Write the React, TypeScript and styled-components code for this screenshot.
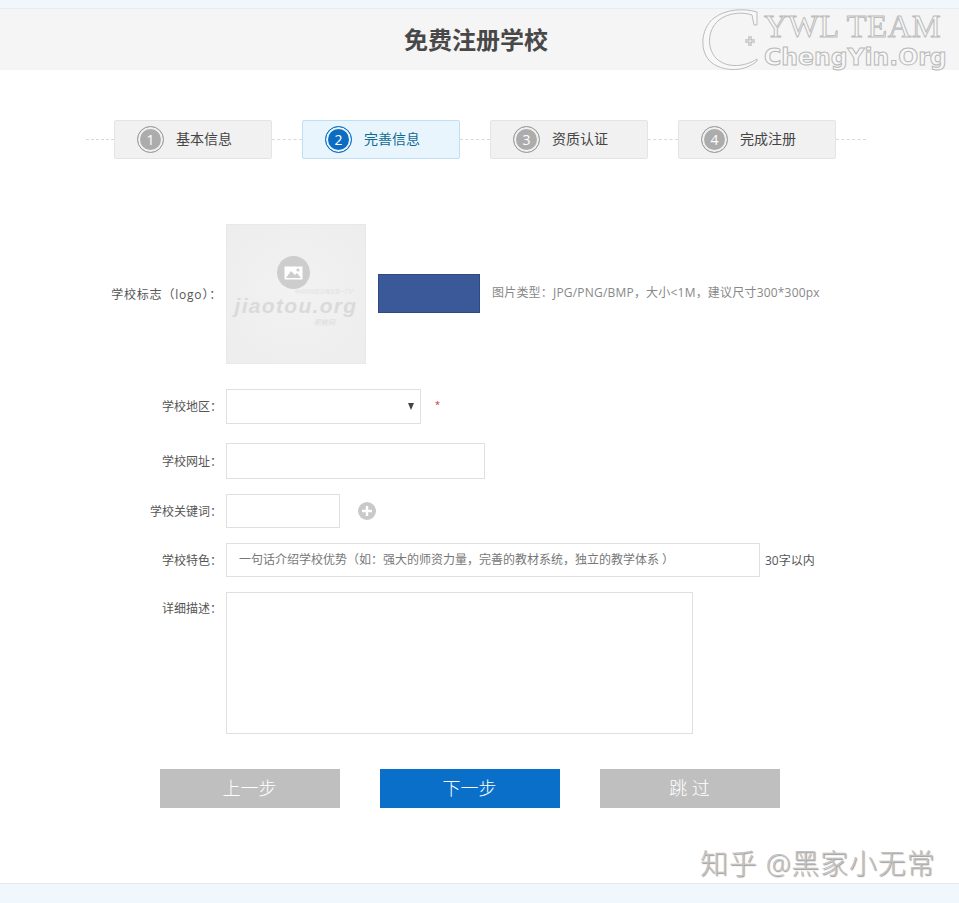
import React from 'react';
import styled, { createGlobalStyle } from 'styled-components';

const cjk = '"Open Sans", "Noto Sans CJK SC", sans-serif';

const GlobalStyle = createGlobalStyle`
  html, body {
    margin: 0;
    padding: 0;
    background: #fff;
    font-family: ${cjk};
  }
  * {
    box-sizing: border-box;
  }
`;

const Page = styled.div`
  position: relative;
  width: 959px;
  height: 903px;
  overflow: hidden;
  display: flex;
  flex-direction: column;
`;
const TopStrip = styled.div`
  height: 9px;
  background: #f0f7fd;
  border-bottom: 1px solid #e6edf2;
`;
const Header = styled.header`
  height: 61px;
  background: #f5f5f5;
  display: flex;
  align-items: center;
  justify-content: center;
  padding-right: 7px;
  h1 {
    margin: 0;
    font-size: 24px;
    font-weight: 700;
    color: #484848;
    line-height: 61px;
  }
`;
const Main = styled.main`
  flex: 1;
  background: #fff;
`;
const Steps = styled.div`
  display: flex;
  align-items: center;
  margin: 50px 93px 0 86px;
  height: 39px;
`;
const Dash = styled.span<{ w: number }>`
  width: ${(p) => p.w}px;
  border-top: 1px dashed #d9d9d9;
`;
const Step = styled.div<{ active?: boolean }>`
  width: 158px;
  height: 39px;
  display: flex;
  align-items: center;
  padding-left: 22px;
  gap: 12px;
  border: 1px solid ${(p) => (p.active ? '#bfe0f3' : '#e4e4e4')};
  border-radius: 2px;
  background: ${(p) => (p.active ? '#e9f5fc' : '#f1f1f1')};
  color: ${(p) => (p.active ? '#0f6a96' : '#444')};
  font-size: 14px;
  line-height: 14px;
  padding-bottom: 1px;
`;
const StepNum = styled.span<{ active?: boolean }>`
  width: 27px;
  height: 27px;
  margin-top: 1px;
  border-radius: 50%;
  display: flex;
  align-items: center;
  justify-content: center;
  font-size: 14px;
  color: #fff;
  background: ${(p) => (p.active ? '#0b6cc2' : '#acacac')};
  box-shadow: inset 0 0 0 2px ${(p) => (p.active ? '#e9f5fc' : '#f1f1f1')};
  border: 1px solid ${(p) => (p.active ? '#0b6cc2' : '#9c9c9c')};
`;
const Form = styled.form`
  margin-top: 65px;
  display: flex;
  flex-direction: column;
`;
const Row = styled.div<{ top?: number; start?: boolean }>`
  display: flex;
  align-items: ${(p) => (p.start ? 'flex-start' : 'center')};
  margin-top: ${(p) => p.top ?? 0}px;
`;
const Label = styled.label<{ start?: boolean; spread?: number }>`
  width: 222px;
  margin-right: 4px;
  text-align: right;
  font-size: 12px;
  line-height: 16px;
  color: #555;
  letter-spacing: ${(p) => p.spread ?? 0}px;
  margin-top: ${(p) => (p.start ? '9px' : '1px')};
  flex-shrink: 0;
`;
const Thumb = styled.div`
  position: relative;
  width: 140px;
  height: 140px;
  background: radial-gradient(circle at center, #f2f2f2 0%, #ededed 100%);
  border: 1px solid #e9e9e9;
  display: flex;
  flex-direction: column;
  align-items: center;
  padding-top: 31px;
  padding-right: 6px;
  overflow: hidden;
`;
const ThumbIcon = styled.div`
  width: 33px;
  height: 33px;
  border-radius: 50%;
  background: #cdcdcd;
  display: flex;
  align-items: center;
  justify-content: center;
`;
const ThumbCaption = styled.div`
  align-self: flex-end;
  height: 5px;
  padding-right: 4px;
  font-size: 5px;
  line-height: 5px;
  color: #e1e1e1;
`;
const ThumbBrand = styled.div`
  font-family: "Liberation Sans", sans-serif;
  font-size: 21px;
  line-height: 24px;
  height: 24px;
  margin-left: 6px;
  font-weight: 700;
  font-style: italic;
  letter-spacing: 1.3px;
  color: #dadada;
`;
const ThumbSub = styled.div`
  align-self: flex-end;
  padding-right: 24px;
  font-size: 7px;
  line-height: 9px;
  font-style: italic;
  color: #dcdcdc;
`;
const UploadBtn = styled.button`
  width: 102px;
  height: 39px;
  margin: -2px 12px 0 12px;
  padding: 0;
  background: #3b5998;
  border: 1px solid #2f4a80;
`;
const Hint = styled.span`
  font-size: 12px;
  line-height: 16px;
  letter-spacing: 0.2px;
  color: #888;
  margin-top: -2px;
`;
const SelectWrap = styled.div`
  position: relative;
  width: 195px;
  height: 35px;
`;
const Select = styled.select`
  width: 100%;
  height: 100%;
  appearance: none;
  background: #fff;
  border: 1px solid #e0e0e0;
`;
const Arrow = styled.span`
  position: absolute;
  right: 7px;
  top: 14px;
  width: 0;
  height: 0;
  border-left: 3.5px solid transparent;
  border-right: 3.5px solid transparent;
  border-top: 7px solid #444;
`;
const Required = styled.span`
  margin-left: 14px;
  margin-top: -4px;
  color: #d0202c;
  font-size: 9px;
`;
const Input = styled.input<{ w: number; h: number }>`
  width: ${(p) => p.w}px;
  height: ${(p) => p.h}px;
  border: 1px solid #e0e0e0;
  background: #fff;
  padding: 0 12px 2px;
  font-family: ${cjk};
  font-size: 12px;
  color: #777;
  outline: none;
  &::placeholder {
    color: #777;
    opacity: 1;
  }
`;
const AddBtn = styled.button`
  width: 18px;
  height: 18px;
  margin-left: 18px;
  padding: 0;
  border: 0;
  border-radius: 50%;
  background: #c9c9c9;
  display: flex;
  align-items: center;
  justify-content: center;
`;
const Note = styled.span`
  margin-left: 5px;
  font-size: 12px;
  color: #555;
`;
const TextArea = styled.textarea`
  width: 467px;
  height: 142px;
  border: 1px solid #e0e0e0;
  resize: none;
  outline: none;
  display: block;
`;
const Actions = styled.div`
  display: flex;
  gap: 40px;
  margin: 35px 0 0 160px;
`;
const ActionBtn = styled.button<{ primary?: boolean }>`
  width: 180px;
  height: 39px;
  border: 0;
  padding: 0 1px 3px 0;
  background: ${(p) => (p.primary ? '#0a6fc9' : '#bfbfbf')};
  color: #fff;
  font-family: ${cjk};
  font-size: 18px;
  font-weight: 300;
`;
const Footer = styled.footer`
  height: 20px;
  background: #f0f7fd;
  border-top: 1px solid #e3ebf1;
`;
const Mark = styled.div`
  position: absolute;
  left: 700px;
  top: 9px;
  width: 250px;
  height: 64px;
  pointer-events: none;
`;
const MarkTitle = styled.div`
  position: absolute;
  left: 64px;
  top: 1px;
  font-family: "Liberation Serif", serif;
  font-size: 32.5px;
  line-height: 32px;
  white-space: nowrap;
  letter-spacing: 0.6px;
  color: #f7f7f7;
  -webkit-text-stroke: 1px #bcbcbc;
`;
const MarkSite = styled.div`
  position: absolute;
  left: 64px;
  top: 33px;
  font-family: "DejaVu Sans", sans-serif;
  font-weight: 700;
  font-size: 23.5px;
  line-height: 30px;
  white-space: nowrap;
  color: #f7f7f7;
  -webkit-text-stroke: 1px #b8b8b8;
`;
const Credit = styled.div`
  position: absolute;
  left: 700px;
  top: 845px;
  font-size: 28px;
  line-height: 36px;
  letter-spacing: 0.8px;
  white-space: nowrap;
  font-weight: 300;
  color: #c2c2c2;
  text-shadow: 1px 1px 1px #9a9a9a;
  pointer-events: none;
`;

const stepData = [
  { n: 1, text: '基本信息' },
  { n: 2, text: '完善信息', active: true },
  { n: 3, text: '资质认证' },
  { n: 4, text: '完成注册' },
];

const App: React.FC = () => (
  <Page>
    <GlobalStyle />
    <TopStrip />
    <Header>
      <h1>免费注册学校</h1>
    </Header>
    <Main>
      <Steps>
        <Dash w={28} />
        {stepData.map((s) => (
          <React.Fragment key={s.n}>
            <Step active={s.active}>
              <StepNum active={s.active}>{s.n}</StepNum>
              {s.text}
            </Step>
            <Dash w={30} />
          </React.Fragment>
        ))}
      </Steps>
      <Form>
        <Row>
          <Label spread={0.8}>学校标志（logo）：</Label>
          <Thumb>
            <ThumbIcon>
              <svg width="19" height="14" viewBox="0 0 19 14">
                <rect x="0.5" y="0.5" width="18" height="13" fill="#fff" />
                <path d="M2 12 L7 5 L11 9 L13 7 L17 12 Z" fill="#cdcdcd" />
                <circle cx="14" cy="4" r="1.6" fill="#cdcdcd" />
              </svg>
            </ThumbIcon>
            <ThumbCaption>中国特色职业教育第一门户</ThumbCaption>
            <ThumbBrand>jiaotou.org</ThumbBrand>
            <ThumbSub>职教网</ThumbSub>
          </Thumb>
          <UploadBtn type="button" aria-label="上传" />
          <Hint>图片类型：JPG/PNG/BMP，大小&lt;1M，建议尺寸300*300px</Hint>
        </Row>
        <Row top={25}>
          <Label>学校地区：</Label>
          <SelectWrap>
            <Select />
            <Arrow />
          </SelectWrap>
          <Required>*</Required>
        </Row>
        <Row top={19}>
          <Label>学校网址：</Label>
          <Input w={259} h={36} />
        </Row>
        <Row top={15}>
          <Label>学校关键词：</Label>
          <Input w={114} h={34} />
          <AddBtn type="button" aria-label="添加">
            <svg width="10" height="10" viewBox="0 0 10 10">
              <path d="M5 0 V10 M0 5 H10" stroke="#fff" strokeWidth="2.4" />
            </svg>
          </AddBtn>
        </Row>
        <Row top={15}>
          <Label>学校特色：</Label>
          <Input w={534} h={34} placeholder="一句话介绍学校优势（如：强大的师资力量，完善的教材系统，独立的教学体系 ）" />
          <Note>30字以内</Note>
        </Row>
        <Row top={15} start>
          <Label start>详细描述：</Label>
          <TextArea />
        </Row>
      </Form>
      <Actions>
        <ActionBtn type="button">上一步</ActionBtn>
        <ActionBtn type="button" primary>下一步</ActionBtn>
        <ActionBtn type="button">跳 过</ActionBtn>
      </Actions>
    </Main>
    <Footer />
    <Mark>
      <svg width="66" height="64" viewBox="0 0 66 64">
        <path
          d="M57 3 C44 -1 26 0 14 9 C0 20 -1 44 12 54 C26 64 46 62 57 52 L57 50 C45 58 28 59 18 51 C7 42 6 22 19 11 C29 3 44 3 52 6 L54 16 L57 16 Z"
          fill="#f8f8f8"
          stroke="#bbb"
          strokeWidth="1"
        />
        <path d="M50 27 V37 M45 32 H55" stroke="#aaa" strokeWidth="3" />
        <path d="M50 27 V37 M45 32 H55" stroke="#f8f8f8" strokeWidth="1" fill="none" />
      </svg>
      <MarkTitle>YWL TEAM</MarkTitle>
      <MarkSite>ChengYin.Org</MarkSite>
    </Mark>
    <Credit>知乎 @黑家小无常</Credit>
  </Page>
);

export default App;
